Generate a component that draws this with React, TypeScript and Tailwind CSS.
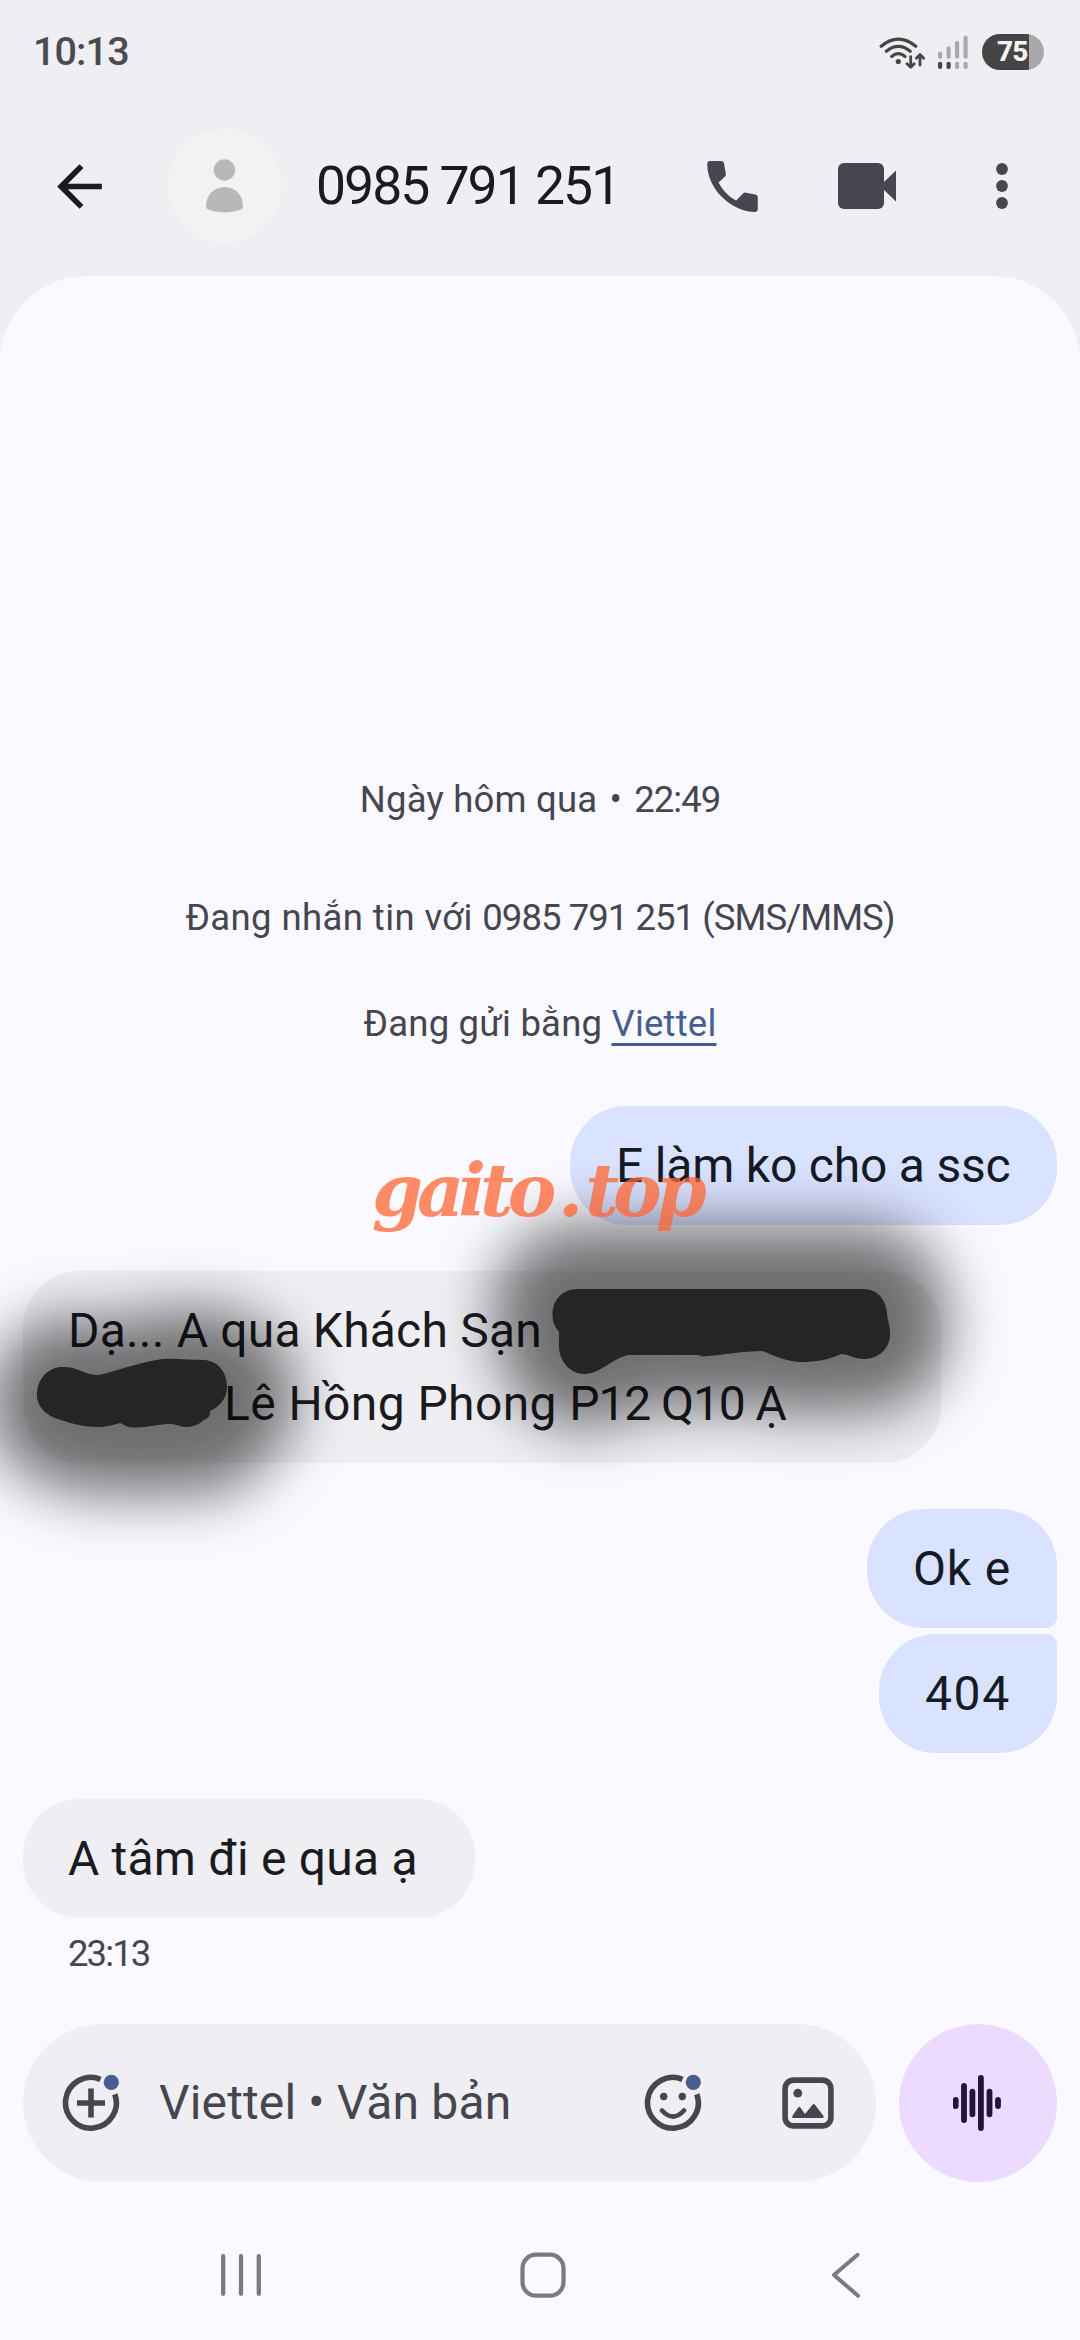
import React from 'react';

const INK = '#45464f';

function StatusIcons() {
  return (
    <svg className="h-[40px] w-[172px]" viewBox="0 0 172 40" fill="none">
      <g stroke="#454545" strokeWidth="3.2" strokeLinecap="round" strokeLinejoin="round">
        <path d="M10.2 14.2Q27.3 0.2 44.8 14.2M15.4 19.2Q27.3 9.6 39.2 19.2M20.7 24.4Q27.3 18.9 34 24.4" />
        <path strokeWidth="2.8" d="M39.7 24.6V35M36 31.8L39.7 35.3L43.2 31.8M49 33V23M45.4 26.2L49 22.6L52.7 26.2" />
      </g>
      <circle cx="27.3" cy="29.6" r="2.6" fill="#454545" />
      <g fill="#a9a9ad">
        <rect x="67" y="19.5" width="4.2" height="7.2" rx="2" />
        <rect x="75.5" y="14.5" width="4.2" height="12.2" rx="2" />
        <rect x="84" y="9" width="4.2" height="17.7" rx="2" />
        <rect x="92.5" y="3.8" width="4.2" height="22.9" rx="2" />
        <rect x="84" y="29.8" width="4.2" height="7.2" rx="2" />
        <rect x="92.5" y="29.8" width="4.2" height="7.2" rx="2" />
      </g>
      <g fill="#454545">
        <rect x="67" y="29.8" width="4.2" height="7.2" rx="2" />
        <rect x="75.5" y="29.8" width="4.2" height="7.2" rx="2" />
      </g>
    </svg>
  );
}

function StatusBar() {
  return (
    <div className="flex h-[103px] items-center justify-between pl-[33px] pr-[36px]">
      <span className="text-[39.5px] font-medium leading-[40px] tracking-[-0.9px] text-[#4b4b4d]">10:13</span>
      <div className="flex items-center">
        <div className="w-[111px] overflow-hidden">
          <StatusIcons />
        </div>
        <div className="flex h-[36px] w-[62px] items-center overflow-hidden rounded-full bg-[linear-gradient(90deg,#454545_47px,#a9a9ad_47px)] pl-[15px]">
          <span className="text-[28px] font-extrabold leading-none tracking-[-1px] text-[#f5f5f7]">75</span>
        </div>
      </div>
    </div>
  );
}

function Header() {
  return (
    <header className="flex h-[173px] items-center pb-[7px]">
      <svg className="ml-[46px] size-[67px]" viewBox="0 0 24 24" fill="#1a1b21">
        <path d="M20 11H7.83l5.59-5.59L12 4l-8 8 8 8 1.41-1.41L7.83 13H20v-2z" />
      </svg>
      <div className="ml-[55px] flex size-[114px] items-center justify-center rounded-full bg-[#f2f2f2]">
        <svg className="size-[114px]" viewBox="0 0 114 114" fill="#b7b9b8">
          <circle cx="56.5" cy="41" r="10.7" />
          <path d="M38 77C38 66.500 46 58 56.500 58S75 66.500 75 77C75 79.500 74 80 72 80.800C62 84.300 51 84.300 41 80.800C39 80 38 79.500 38 77Z" />
        </svg>
      </div>
      <h1 className="ml-[34px] w-[368px] whitespace-nowrap text-[53.500px] leading-[60px] tracking-[-2px] text-[#1a1b21]">0985 791 251</h1>
      <svg className="ml-[15px] size-[67px]" viewBox="0 0 24 24" fill={INK}>
        <path d="M20.2 21.1C18 21.1 15.900 20.600 13.900 19.700C11.800 18.800 9.900 17.500 8.200 15.800C6.500 14.100 5.200 12.200 4.300 10.100C3.400 8.100 2.950 6 2.950 3.900C2.950 3.300 3.300 2.850 3.900 2.850H8C8.500 2.850 8.850 3.200 8.950 3.700L9.600 7.300C9.650 7.700 9.600 8.100 9.300 8.400L7 10.600C7.800 12.100 8.700 13.300 9.700 14.300C10.800 15.400 12 16.300 13.300 17L15.700 14.600C16 14.300 16.350 14.150 16.800 14.200L20.200 14.900C20.700 15 21.050 15.350 21.050 15.900V20.100C21.050 20.700 20.800 21.100 20.200 21.100Z" />
      </svg>
      <svg className="ml-[69px] h-[46px] w-[62px]" viewBox="0 0 62 46" fill={INK}>
        <rect x="3" width="46" height="46" rx="6" />
        <path d="M49 19L61 7.500V38.500L49 27Z" />
      </svg>
      <svg className="ml-[98px] h-[48px] w-[14px]" viewBox="0 0 14 48" fill={INK}>
        <circle cx="7" cy="7" r="5.900" />
        <circle cx="7" cy="24" r="5.900" />
        <circle cx="7" cy="41" r="5.900" />
      </svg>
    </header>
  );
}

function Sent({ children, className }: { children: React.ReactNode; className: string }) {
  return (
    <div className={`flex h-[119px] items-center self-end whitespace-nowrap bg-[#d9e2ff] pl-[46px] text-[48px] leading-[73px] text-[#151b26] ${className}`}>
      {children}
    </div>
  );
}

const BLOB_LEFT =
  'M37 1393C38 1377 50 1366 64 1367C78 1367 84 1375 98 1375C108 1374 132 1364 162 1359C176 1358 190 1360 205 1360C220 1362 227 1374 227 1387C227 1399 219 1407 210 1411C210 1416 209 1418 204 1420C197 1426 191 1427 186 1427C179 1427 174 1423 167 1424C155 1425 147 1427 136 1427.500C129 1428 125 1426 120.500 1423C112 1425 106 1427 98 1427C82 1427 70 1423 58 1419C45 1415 36 1405 37 1393Z';
const BLOB_RIGHT =
  'M552.500 1315C552.500 1300 562 1289 578 1289H863C879 1289 887 1301 887.500 1318C889 1324 890 1328 890 1334C890 1349 878 1359 864 1359C854 1359 848 1354 841.500 1354C828 1360 815 1362 802 1362C786 1362 773 1355 762.500 1351C742 1351 725 1355 703 1356.500L698 1355H628C613 1358 600 1374 584.500 1374C570 1374 559 1361 559 1346V1332C555 1327 552.500 1322 552.500 1315Z';

function Scribbles() {
  return (
    <svg className="pointer-events-none absolute left-0 top-[1100px] h-[500px] w-[1080px]" viewBox="0 1100 1080 500">
      <defs>
        <filter id="halo" colorInterpolationFilters="sRGB" filterUnits="userSpaceOnUse" x="-200" y="1000" width="1450" height="700">
          <feGaussianBlur stdDeviation="29" />
        </filter>
      </defs>
      <g filter="url(#halo)" opacity="0.540" stroke="#000" strokeWidth="118" strokeLinejoin="round">
        <path d={BLOB_LEFT} transform="translate(9 10)" />
        <path d={BLOB_RIGHT} transform="translate(0 -6)" />
      </g>
      <path d={BLOB_LEFT} fill="#252525" />
      <path d={BLOB_RIGHT} fill="#252525" />
    </svg>
  );
}

function Messages() {
  return (
    <section className="flex h-[1748px] flex-col pl-[23px] pr-[23px] pt-[500px] text-[#45464f]">
      <div className="flex flex-col items-center whitespace-nowrap text-[36.500px] leading-[48px]">
        <p className="tracking-[0.200px]">
          Ngày hôm qua<span className="mx-[3px]"> • </span>
          <span className="tracking-[-1px]">22:49</span>
        </p>
        <p className="mt-[70px] tracking-[0.400px]">
          Đang nhắn tin với <span className="tracking-[-0.950px]">0985 791 251 (SMS/MMS)</span>
        </p>
        <p className="mt-[58px] tracking-[0.200px]">
          Đang gửi bằng{' '}
          <a className="text-[#465d91] underline decoration-[3px] underline-offset-[7px]">Viettel</a>
        </p>
      </div>
      <Sent className="mt-[58px] w-[487px] rounded-[57px]">
        <span className="tracking-[-0.200px]">E làm ko cho a ssc</span>
      </Sent>
      <div className="mt-[46px] h-[192px] w-[918px] whitespace-nowrap rounded-[57px] bg-[#eeeef3] py-[23px] pl-[45px] text-[48px] leading-[73px] text-[#1a1b21]">
        <p className="tracking-[0.200px]">Dạ... A qua Khách Sạn</p>
        <p className="pl-[156px] tracking-[0.400px]">
          Lê Hồng Phong <span className="tracking-[-1.100px]">P12 Q10 Ạ</span>
        </p>
      </div>
      <Sent className="mt-[46px] w-[190px] rounded-[57px] rounded-br-[11px]">
        <span className="tracking-[0.800px]">Ok e</span>
      </Sent>
      <Sent className="mt-[6px] w-[178px] rounded-[57px] rounded-tr-[11px]">
        <span className="tracking-[1.600px]">404</span>
      </Sent>
      <div className="mt-[46px] flex h-[119px] w-[452px] items-center whitespace-nowrap rounded-[57px] bg-[#eeeef3] pl-[45px] text-[48px] leading-[73px] tracking-[0.200px] text-[#1a1b21]">
        A tâm đi e qua ạ
      </div>
      <p className="ml-[45px] mt-[12px] text-[36.500px] leading-[48px] tracking-[-1.900px]">23:13</p>
    </section>
  );
}

function Composer() {
  return (
    <div className="flex h-[158px] justify-between px-[23px]">
      <div className="flex w-[853px] items-center rounded-full bg-[#eeeef3]">
        <svg className="ml-[38px] size-[60px]" viewBox="0 0 60 60" fill="none" stroke={INK} strokeWidth="5.600">
          <path d="M39.500 6.300A25.400 25.400 0 1 0 53.800 21.200" />
          <path d="M30 15.500V44.500M16 30H44" />
          <circle cx="50.300" cy="9.300" r="7.600" fill="#4a5c91" stroke="none" />
        </svg>
        <span className="ml-[38px] w-[440px] whitespace-nowrap text-[48px] leading-[60px] tracking-[0.150px] text-[#45464f]">Viettel • Văn bản</span>
        <svg className="ml-[44px] size-[60px]" viewBox="0 0 60 60" fill="none" stroke={INK} strokeWidth="5.600">
          <path d="M39.500 6.300A25.400 25.400 0 1 0 53.800 21.200" />
          <path d="M19 37.500Q30 49.500 41 37.500" strokeWidth="4.800" strokeLinecap="round" />
          <g stroke="none" fill={INK}>
            <circle cx="20.700" cy="23.500" r="3.700" />
            <circle cx="39.300" cy="23.500" r="3.700" />
          </g>
          <circle cx="50.300" cy="9.300" r="7.600" fill="#4a5c91" stroke="none" />
        </svg>
        <svg className="ml-[79px] size-[52px]" viewBox="0 0 52 52" fill={INK}>
          <rect x="3.100" y="3.100" width="45.800" height="45.800" rx="8.500" fill="none" stroke={INK} strokeWidth="5.600" />
          <circle cx="15.800" cy="16.200" r="4.400" />
          <path d="M11.500 41C10 41 9.800 39.800 10.500 38.700L16.200 30.500Q17.300 29 18.400 30.500L23 37L30.600 27.700Q31.800 26.400 33 27.700L41.300 38.700C42.100 39.900 41.700 41 40.300 41Z" />
        </svg>
      </div>
      <div className="flex size-[158px] items-center justify-center rounded-full bg-[#eddbff]">
        <svg className="h-[60px] w-[50px]" viewBox="0 0 50 60" fill="#25133b">
          <rect x="-0.200" y="24" width="5.800" height="12" rx="2.900" />
          <rect x="8.100" y="10" width="5.800" height="40" rx="2.900" />
          <rect x="16.500" y="15.700" width="5.800" height="28.500" rx="2.900" />
          <rect x="25" y="2" width="5.800" height="56" rx="2.900" />
          <rect x="33.600" y="15.700" width="5.800" height="28.500" rx="2.900" />
          <rect x="42.100" y="24" width="5.800" height="12" rx="2.900" />
        </svg>
      </div>
    </div>
  );
}

function NavBar() {
  return (
    <nav className="flex h-[158px] items-center pt-[28px]">
      <svg className="ml-[216px] size-[50px]" viewBox="0 0 50 50" stroke="#7b7b7e" strokeWidth="4.300" strokeLinecap="round">
        <path d="M7.200 6.200V43.800M25 6.200V43.800M42.800 6.200V43.800" />
      </svg>
      <svg className="ml-[252px] size-[50px]" viewBox="0 0 50 50" fill="none" stroke="#7b7b7e" strokeWidth="4.200">
        <rect x="4.500" y="4.700" width="41" height="41" rx="13.500" />
      </svg>
      <svg className="ml-[253px] size-[50px]" viewBox="0 0 50 50" fill="none" stroke="#7b7b7e" strokeWidth="4" strokeLinecap="round" strokeLinejoin="round">
        <path d="M36.500 4.800L13 25L37 45.700" />
      </svg>
    </nav>
  );
}

export default function App() {
  return (
    <main className="relative flex h-[2340px] w-[1080px] flex-col overflow-hidden bg-[#eeeef3] font-['Roboto',sans-serif]">
      <StatusBar />
      <Header />
      <div className="flex-1 rounded-t-[86px] bg-[#faf9ff]">
        <Messages />
        <Composer />
        <NavBar />
      </div>
      <Scribbles />
      <div className="absolute left-[372px] top-[1142px] whitespace-nowrap font-['DejaVu_Serif',serif] text-[73px] font-bold italic leading-[96px] tracking-[-6px] text-[#ff6633]/75">
        gaito<span className="tracking-[-18px]"> </span>
        <span className="tracking-[2px]">.</span>top
      </div>
    </main>
  );
}
